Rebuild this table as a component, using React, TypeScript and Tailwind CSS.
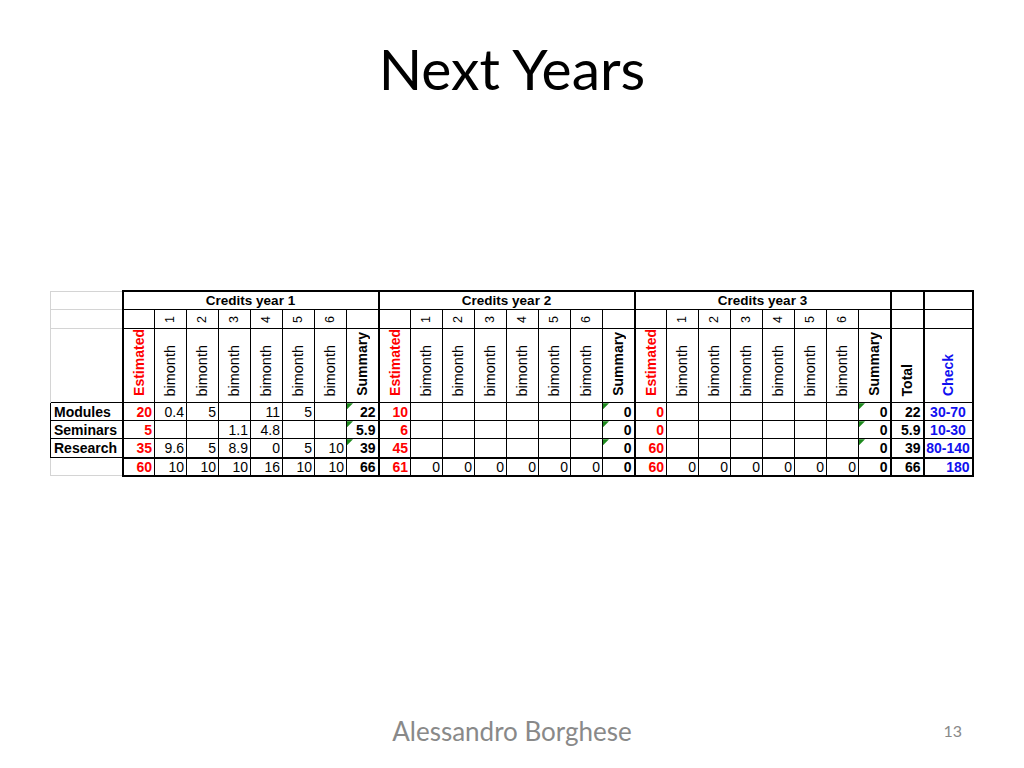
import React from "react";

type Year = {
  title: string;
  est: string[];
  vals: string[][];
  sum: string[];
};

const blank = ["", "", "", "", "", ""];
const zeros = ["0", "0", "0", "0", "0", "0"];

const years: Year[] = [
  {
    title: "Credits year 1",
    est: ["20", "5", "35", "60"],
    vals: [
      ["0.4", "5", "", "11", "5", ""],
      ["", "", "1.1", "4.8", "", ""],
      ["9.6", "5", "8.9", "0", "5", "10"],
      ["10", "10", "10", "16", "10", "10"],
    ],
    sum: ["22", "5.9", "39", "66"],
  },
  {
    title: "Credits year 2",
    est: ["10", "6", "45", "61"],
    vals: [blank, blank, blank, zeros],
    sum: ["0", "0", "0", "0"],
  },
  {
    title: "Credits year 3",
    est: ["0", "0", "60", "60"],
    vals: [blank, blank, blank, zeros],
    sum: ["0", "0", "0", "0"],
  },
];

const labels = ["Modules", "Seminars", "Research", ""];
const totals = ["22", "5.9", "39", "66"];
const checks = ["30-70", "10-30", "80-140", "180"];

function Vert({ children, className = "" }: { children: React.ReactNode; className?: string }) {
  return (
    <span className={"inline-block rotate-180 leading-none [writing-mode:vertical-rl] " + className}>
      {children}
    </span>
  );
}

export default function App() {
  const grey = "border border-[#d4d4d4]";
  const cell = "border border-black p-0";

  return (
    <div className="flex h-[768px] w-[1024px] flex-col bg-white">
      <h1 className="mt-[34px] text-center font-['Lato',sans-serif] text-[57px] leading-[68px] font-normal text-black">
        Next Years
      </h1>

      <div className="mt-[188px] pl-[50px]">
        <table className="table-fixed border-collapse font-['Liberation_Sans',Arial,sans-serif] text-[14px] text-black">
          <colgroup>
            <col className="w-[72px]" />
            {Array.from({ length: 24 }).map((_, i) => (
              <col key={i} className="w-[32px]" />
            ))}
            <col className="w-[33px]" />
            <col className="w-[49px]" />
          </colgroup>
          <tbody>
            {/* row 1: group titles */}
            <tr className="h-[18px]">
              <td className={grey + " border-b-0"}></td>
              {years.map((y) => (
                <td
                  key={y.title}
                  colSpan={8}
                  className={cell + " border-t-2 border-l-2 text-center text-[13.5px] font-bold leading-none"}
                >
                  {y.title}
                </td>
              ))}
              <td className={cell + " border-t-2 border-l-2"}></td>
              <td className={cell + " border-t-2 border-r-2 border-l-2"}></td>
            </tr>

            {/* row 2: bimonth numbers */}
            <tr className="h-[18px]">
              <td className={grey + " border-b-0"}></td>
              {years.map((y) => (
                <React.Fragment key={y.title}>
                  <td className={cell + " border-l-2"}></td>
                  {[1, 2, 3, 4, 5, 6].map((n) => (
                    <td key={n} className={cell + " text-center align-middle text-[12.5px]"}>
                      <Vert>{n}</Vert>
                    </td>
                  ))}
                  <td className={cell}></td>
                </React.Fragment>
              ))}
              <td className={cell + " border-l-2"}></td>
              <td className={cell + " border-r-2 border-l-2"}></td>
            </tr>

            {/* row 3: rotated column headers */}
            <tr className="h-[74px]">
              <td className={grey + " border-b-0"}></td>
              {years.map((y) => (
                <React.Fragment key={y.title}>
                  <td className={cell + " border-l-2 pb-0 text-center align-bottom"}>
                    <Vert className="text-[14px] font-bold text-[#ff0000]">Estimated</Vert>
                  </td>
                  {[1, 2, 3, 4, 5, 6].map((n) => (
                    <td key={n} className={cell + " pb-0 text-center align-bottom"}>
                      <Vert className="text-[14.5px]">bimonth</Vert>
                    </td>
                  ))}
                  <td className={cell + " pb-0 text-center align-bottom"}>
                    <Vert className="text-[14px] font-bold">Summary</Vert>
                  </td>
                </React.Fragment>
              ))}
              <td className={cell + " border-l-2 pb-0 text-center align-bottom"}>
                <Vert className="text-[14px] font-bold">Total</Vert>
              </td>
              <td className={cell + " border-r-2 border-l-2 pb-0 text-center align-bottom"}>
                <Vert className="text-[14px] font-bold text-[#1010f0]">Check</Vert>
              </td>
            </tr>

            {/* data rows */}
            {labels.map((label, r) => {
              const last = r === 3;
              const rowLine = last ? " border-t-2 border-b-2" : "";
              return (
                <tr key={r} className={r === 2 ? "h-[19px]" : "h-[18px]"}>
                  {last ? (
                    <td className={grey + " border-t-0"}></td>
                  ) : (
                    <td className={cell + " pl-[3px] text-left font-bold leading-none"}>{label}</td>
                  )}
                  {years.map((y) => (
                    <React.Fragment key={y.title}>
                      <td
                        className={
                          cell + rowLine + " border-l-2 pr-[2px] text-right font-bold leading-none text-[#ff0000]"
                        }
                      >
                        {y.est[r]}
                      </td>
                      {y.vals[r].map((v, i) => (
                        <td key={i} className={cell + rowLine + " pr-[2px] text-right leading-none"}>
                          {v}
                        </td>
                      ))}
                      <td className={cell + rowLine + " relative pr-[2px] text-right font-bold leading-none"}>
                        {!last && (
                          <span className="absolute top-0 left-0 h-[6px] w-[6px] bg-[#1e8a1e] [clip-path:polygon(0_0,100%_0,0_100%)]" />
                        )}
                        {y.sum[r]}
                      </td>
                    </React.Fragment>
                  ))}
                  <td className={cell + rowLine + " border-l-2 pr-[2px] text-right font-bold leading-none"}>
                    {totals[r]}
                  </td>
                  <td
                    className={
                      cell +
                      rowLine +
                      " border-r-2 border-l-2 font-bold leading-none text-[#1010f0] " +
                      (last ? "pr-[2px] text-right" : "text-center")
                    }
                  >
                    {checks[r]}
                  </td>
                </tr>
              );
            })}
          </tbody>
        </table>
      </div>

      <div className="mt-auto mb-[22px] grid grid-cols-[1fr_auto_1fr] items-center font-['Lato',sans-serif] text-[#898989]">
        <div></div>
        <div className="text-[26px] leading-[30px]">Alessandro Borghese</div>
        <div className="pr-[62px] text-right text-[16px] leading-[20px]">13</div>
      </div>
    </div>
  );
}
